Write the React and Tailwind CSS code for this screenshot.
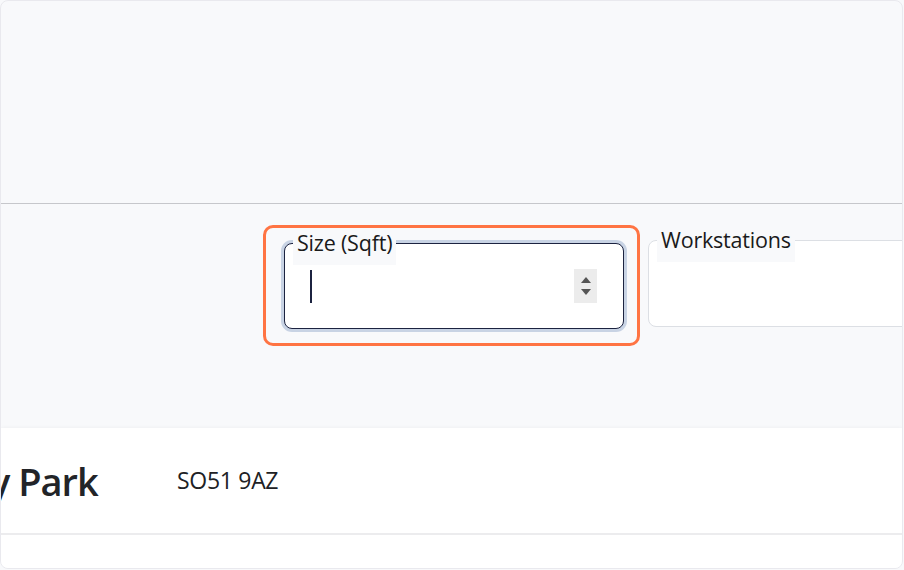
import React from 'react';

const font = { fontFamily: '"Open Sans", Lato, sans-serif' };

const Spinner = () => (
  <div className="flex flex-col items-center justify-center gap-[6px] w-[23px] h-[34px] bg-[#ececec]">
    <svg width="10" height="6" viewBox="0 0 10 6"><path d="M5 0L10 6H0z" fill="#555" /></svg>
    <svg width="10" height="6" viewBox="0 0 10 6"><path d="M0 0H10L5 6z" fill="#555" /></svg>
  </div>
);

const Field = ({ label, focused, className }) => (
  <div className={`relative shrink-0 ${className}`}>
    <div
      className={`h-full bg-white rounded-[8px] ${
        focused
          ? 'border-[1.5px] border-[#1c2340] shadow-[0_0_0_3px_#c8d3e4]'
          : 'border border-[#dcdfe4]'
      } flex items-center pl-[25px] pr-[26px]`}
    >
      {focused && (
        <>
          <div className="w-[1.5px] h-[33px] bg-[#1c2340]" />
          <div className="flex-1" />
          <Spinner />
        </>
      )}
    </div>
    <div className="absolute left-[9px] top-[-12px] h-[34px] px-[4px] bg-[#f8f9fb] text-[21.5px] leading-[24px] tracking-[-0.2px] text-[#1a1a1a]">
      {label}
    </div>
  </div>
);

export default function App() {
  return (
    <div style={font} className="w-[904px] h-[570px] bg-[#f8f9fb] overflow-hidden">
      <div className="w-[903px] h-[569px] flex flex-col border border-[#e9e9ee] rounded-[8px] overflow-hidden">
        {/* ===== TOP ===== */}
        <div className="h-[203px] border-b border-[#c6c7cb]" />

        {/* ===== FILTER ROW ===== */}
        <div className="h-[224px] flex items-start pt-[21px] pl-[262px] gap-[8px]">
          <div className="shrink-0 w-[377px] h-[121px] border-[3px] border-[#ff7443] rounded-[10px] pl-[18px] pr-[13px] pt-[15px] pb-[14px]">
            <Field label="Size (Sqft)" focused className="h-full" />
          </div>
          <Field label="Workstations" className="w-[300px] h-[87px] mt-[15px]" />
        </div>

        {/* ===== RESULT CARD ===== */}
        <div className="flex-1 bg-white flex flex-col shadow-[0_-1px_3px_rgba(0,0,0,0.03)]">
          <div className="h-[107px] flex items-center border-b-2 border-[#ececee]">
            <div className="shrink-0 ml-[-11px] w-[187px] text-[38px] leading-[44px] font-semibold tracking-[-1px] text-[#222428]">y Park</div>
            <div className="text-[23px] text-[#202124] tracking-[-0.3px]">SO51 9AZ</div>
          </div>
          <div className="flex-1" />
        </div>
      </div>
    </div>
  );
}
